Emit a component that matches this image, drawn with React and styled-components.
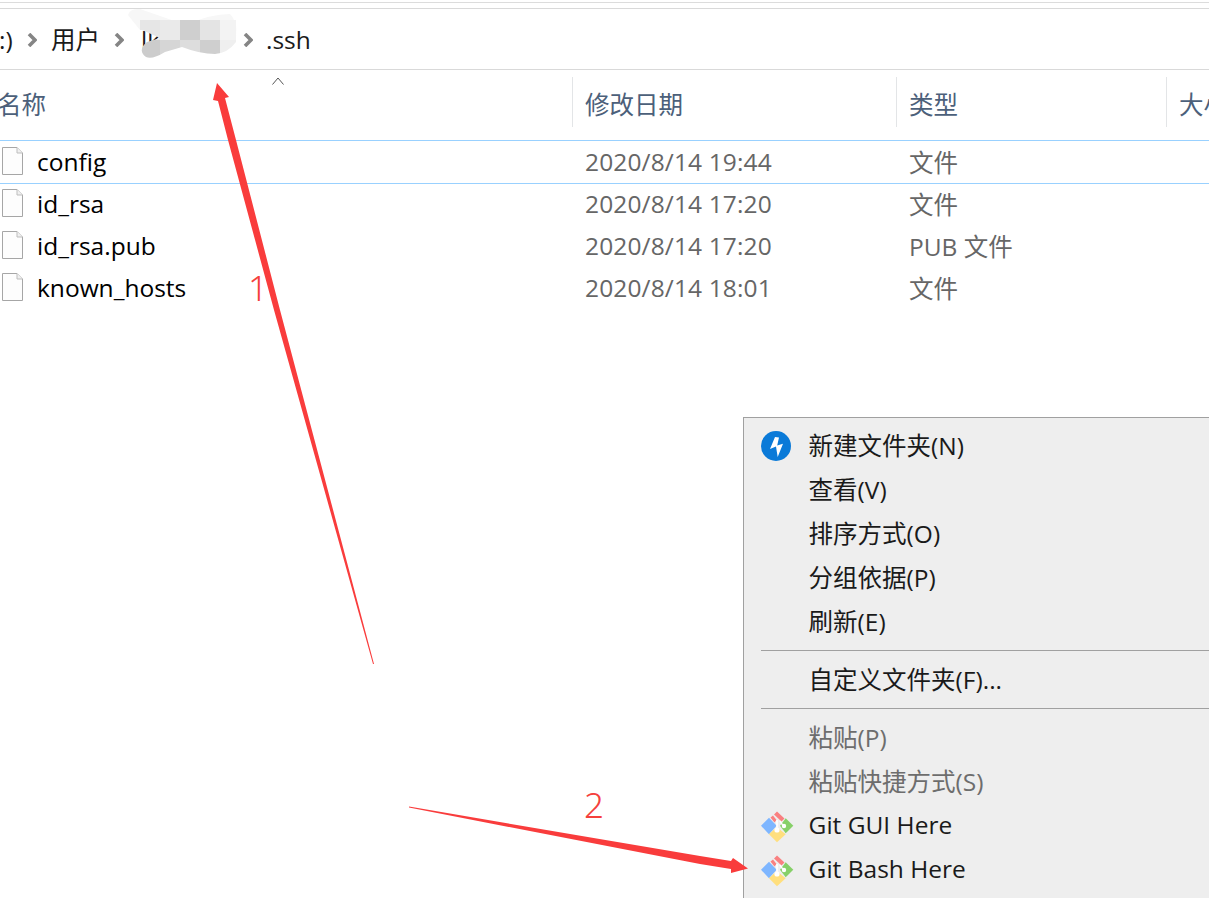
import React from "react";
import styled, { createGlobalStyle } from "styled-components";

const UI_FONT = `"Open Sans", "Noto Sans CJK SC", sans-serif`;

const Global = createGlobalStyle`
  html, body { margin: 0; padding: 0; background: #fff; }
  body { width: 1209px; height: 898px; overflow: hidden; font-family: ${UI_FONT}; }
`;

const Page = styled.div`
  position: relative;
  width: 1209px;
  height: 898px;
  overflow: hidden;
  background: #fff;
`;

const TopStrip = styled.div`
  height: 5px;
  margin-top: 2px;
  border-top: 1px solid #dcdcdc;
  border-bottom: 1px solid #d9d9d9;
`;

const AddressBar = styled.div`
  display: flex;
  align-items: center;
  height: 61px;
  padding-top: 1px;
  border-bottom: 1px solid #d9d9d9;
  box-sizing: border-box;
  font-size: 24.5px;
  color: #1a1a1a;
`;

const Crumb = styled.span`
  margin-left: ${p => p.$left || 0}px;
  width: ${p => p.$width}px;
  flex: none;
  padding-top: 1px;
  line-height: 1;
  white-space: nowrap;
`;

const Chevron = styled.svg`
  width: 10px;
  height: 14px;
  margin-left: ${p => p.$left}px;
  flex: none;
`;

const HeaderRow = styled.div`
  display: grid;
  grid-template-columns: 572px 324px 270px 1fr;
  height: 71px;
  border-bottom: 1px solid #99d1ff;
  box-sizing: border-box;
  padding-top: 7px;
`;

const HeaderCell = styled.div`
  position: relative;
  height: 50px;
  display: flex;
  align-items: center;
  padding-left: ${p => p.$pad}px;
  padding-top: 2px;
  border-left: ${p => (p.$first ? "none" : "1px solid #e3e5e7")};
  font-size: 24.5px;
  color: #4c607a;
  white-space: nowrap;
  box-sizing: border-box;
`;

const HeaderLabel = styled.span`
  margin-left: ${p => p.$left || 0}px;
`;

const SortCaret = styled.svg`
  position: absolute;
  left: 272px;
  top: 0;
  width: 12px;
  height: 8px;
`;

const Row = styled.div`
  display: grid;
  grid-template-columns: 572px 324px 270px 1fr;
  align-items: center;
  height: 42px;
  padding-bottom: 2px;
  box-sizing: border-box;
  box-shadow: ${p => (p.$selected ? "0 1px 0 #99d1ff" : "none")};
  font-size: 24.5px;
`;

const NameCell = styled.div`
  display: flex;
  align-items: center;
  gap: 14px;
  padding-left: 2px;
  color: #000;
`;

const DateCell = styled.div`
  padding-left: 13px;
  color: #666;
  letter-spacing: 0.13px;
  white-space: nowrap;
`;

const TypeCell = styled.div`
  padding-left: 13px;
  color: #666;
  white-space: nowrap;
`;

const Menu = styled.div`
  position: absolute;
  left: 743px;
  top: 417px;
  width: 480px;
  height: 500px;
  padding-top: 6px;
  box-sizing: border-box;
  background: #eeeeee;
  border: 1px solid #a0a0a0;
`;

const MenuItem = styled.div`
  display: flex;
  align-items: center;
  height: 44px;
  font-size: 24.5px;
  white-space: nowrap;
  color: ${p => (p.$disabled ? "#6d6d6d" : "#1a1a1a")};
`;

const MenuLabel = styled.span`
  padding-bottom: 4px;
`;

const IconSlot = styled.div`
  width: 64.6px;
  padding-left: 17px;
  box-sizing: border-box;
  flex: none;
  display: flex;
  align-items: center;
`;

const Separator = styled.div`
  height: 1px;
  margin: 6px 0 7px 17px;
  background: #a0a0a0;
`;

const Overlay = styled.svg`
  position: absolute;
  left: 0;
  top: 0;
  width: 1209px;
  height: 898px;
  pointer-events: none;
`;

const Mark = styled.span`
  position: absolute;
  left: ${p => p.$x}px;
  top: ${p => p.$y}px;
  font-family: "Noto Sans", sans-serif;
  font-size: 35px;
  font-weight: 300;
  line-height: 1;
  color: #f5403c;
`;

const ChevronIcon = ({ left }) => (
  <Chevron $left={left} viewBox="0 0 10 14">
    <path d="M2 1 L8 7 L2 13" fill="none" stroke="#858585" strokeWidth="3.6" />
  </Chevron>
);

const FileIcon = () => (
  <svg width="21" height="28" viewBox="0 0 21 28" style={{ flex: "none" }}>
    <path d="M.5.5H15L20.5 6V27.5H.5Z" fill="#fdfdfd" stroke="#a6a6a6" />
    <path d="M15 .5V6H20.5" fill="#f0f0f0" stroke="#bdbdbd" />
  </svg>
);

const BoltIcon = () => (
  <svg width="30" height="30" viewBox="0 0 30 30">
    <circle cx="15" cy="15" r="15" fill="#0a7ad8" />
    <path d="M14 6 L9 18 L15 15.5 L16.7 26 L22 12.7 L16.2 14.5 L18 6.5 Z" fill="#fff" />
  </svg>
);

const GitIcon = () => (
  <svg width="33" height="33" viewBox="0 0 33 33">
    <path d="M0 15.7 L8 7.7 L15.7 15.7 L8 24.3 Z" fill="#7eb6ff" />
    <path d="M8 24.3 L15.7 17 L24.7 24.3 L16 32.3 Z" fill="#ffdf7e" />
    <path d="M19 15.7 L24.7 8.3 L32.3 15.7 L24.7 23.3 Z" fill="#86d068" />
    <path d="M13 4.5 L16 1.5 L23.5 8.5 L20.5 11.5 Z" fill="#f98080" />
    <path d="M9.5 7.5 L12 5.5 L15.5 10 L13.5 12.5 Z" fill="#f98080" />
    <path d="M16 10 V18" stroke="#fff" strokeWidth="1.6" />
    <path d="M19 11 L22 15.7" stroke="#fff" strokeWidth="1.4" />
    <circle cx="16" cy="20" r="2.6" fill="#fff" />
    <circle cx="23" cy="16" r="2.2" fill="#fff" />
  </svg>
);

const files = [
  { name: "config", date: "2020/8/14 19:44", type: "文件", selected: true },
  { name: "id_rsa", date: "2020/8/14 17:20", type: "文件" },
  { name: "id_rsa.pub", date: "2020/8/14 17:20", type: "PUB 文件" },
  { name: "known_hosts", date: "2020/8/14 18:01", type: "文件" },
];

// mosaic squares over the user name
const mosaic = [
  [140, 20, "#e6e6e6"], [160, 20, "#eaeaea"], [180, 20, "#cfcfcf"], [200, 20, "#e4e4e4"], [220, 20, "#f3f3f3"],
  [140, 40, "#cccccc"], [160, 40, "#d6d6d6"], [180, 40, "#dddddd"], [200, 40, "#cfcfcf"], [220, 40, "#efefef"],
];

const menuItems = [
  { label: "新建文件夹(N)", icon: <BoltIcon /> },
  { label: "查看(V)" },
  { label: "排序方式(O)" },
  { label: "分组依据(P)" },
  { label: "刷新(E)" },
  { separator: true },
  { label: "自定义文件夹(F)..." },
  { separator: true },
  { label: "粘贴(P)", disabled: true },
  { label: "粘贴快捷方式(S)", disabled: true },
  { label: "Git GUI Here", icon: <GitIcon /> },
  { label: "Git Bash Here", icon: <GitIcon /> },
];

const App = () => (
  <Page>
    <Global />
    <TopStrip />
    <AddressBar>
      <Crumb $left={-1} $width={12}>:)</Crumb>
      <ChevronIcon left={16} />
      <Crumb $left={14} $width={48}>用户</Crumb>
      <ChevronIcon left={15} />
      <Crumb $left={17} $width={102}>lk</Crumb>
      <ChevronIcon left={0} />
      <Crumb $left={13} $width={50}>.ssh</Crumb>
    </AddressBar>
    <HeaderRow>
      <HeaderCell $first $pad={0}>
        <HeaderLabel $left={-3}>名称</HeaderLabel>
        <SortCaret viewBox="0 0 12 8">
          <path d="M.5 7.5 L6 1 L11.5 7.5" fill="none" stroke="#555" strokeWidth="1" />
        </SortCaret>
      </HeaderCell>
      <HeaderCell $pad={12}>修改日期</HeaderCell>
      <HeaderCell $pad={12}>类型</HeaderCell>
      <HeaderCell $pad={12}>大小</HeaderCell>
    </HeaderRow>
    {files.map(f => (
      <Row key={f.name} $selected={f.selected}>
        <NameCell>
          <FileIcon />
          {f.name}
        </NameCell>
        <DateCell>{f.date}</DateCell>
        <TypeCell>{f.type}</TypeCell>
      </Row>
    ))}

    <Overlay viewBox="0 0 1209 898">
      <defs>
        <clipPath id="bowtie">
          <path d="M140 20 H236 V42 Q228 53 215 54 Q200 54 182 47 L165 52 Q152 60 146 57 Q137 50 147 42 L160 38 L142 30 H140 Z" />
        </clipPath>
      </defs>
      <path d="M128 15 Q130 8 140 9 L186 25 Q210 14 230 14 Q238 22 236 36 L225 50 L150 25 L140 30 Z" fill="#f7f7f7" />
      <g clipPath="url(#bowtie)">
        {mosaic.map(([x, y, c]) => (
          <rect key={`${x}-${y}`} x={x} y={y} width="20" height="20" fill={c} />
        ))}
      </g>
    </Overlay>

    <Menu>
      {menuItems.map((item, i) =>
        item.separator ? (
          <Separator key={i} />
        ) : (
          <MenuItem key={i} $disabled={item.disabled}>
            <IconSlot>{item.icon}</IconSlot>
            <MenuLabel>{item.label}</MenuLabel>
          </MenuItem>
        )
      )}
    </Menu>

    <Overlay viewBox="0 0 1209 898">
      <path d="M217 83 L229 97 L225 98 L236 140 L280 310 L374 664 L373 664 L274 310 L228 140 L218 101 L213 100 Z" fill="#f93c3c" />
      <path d="M409 806.6 L700 856 L731 861 L733 858 L748 868.5 L731 873 L731 869 L700 864 L409 807.6 Z" fill="#f93c3c" />
    </Overlay>
    <Mark $x={248} $y={270}>1</Mark>
    <Mark $x={584} $y={787}>2</Mark>
  </Page>
);

export default App;
